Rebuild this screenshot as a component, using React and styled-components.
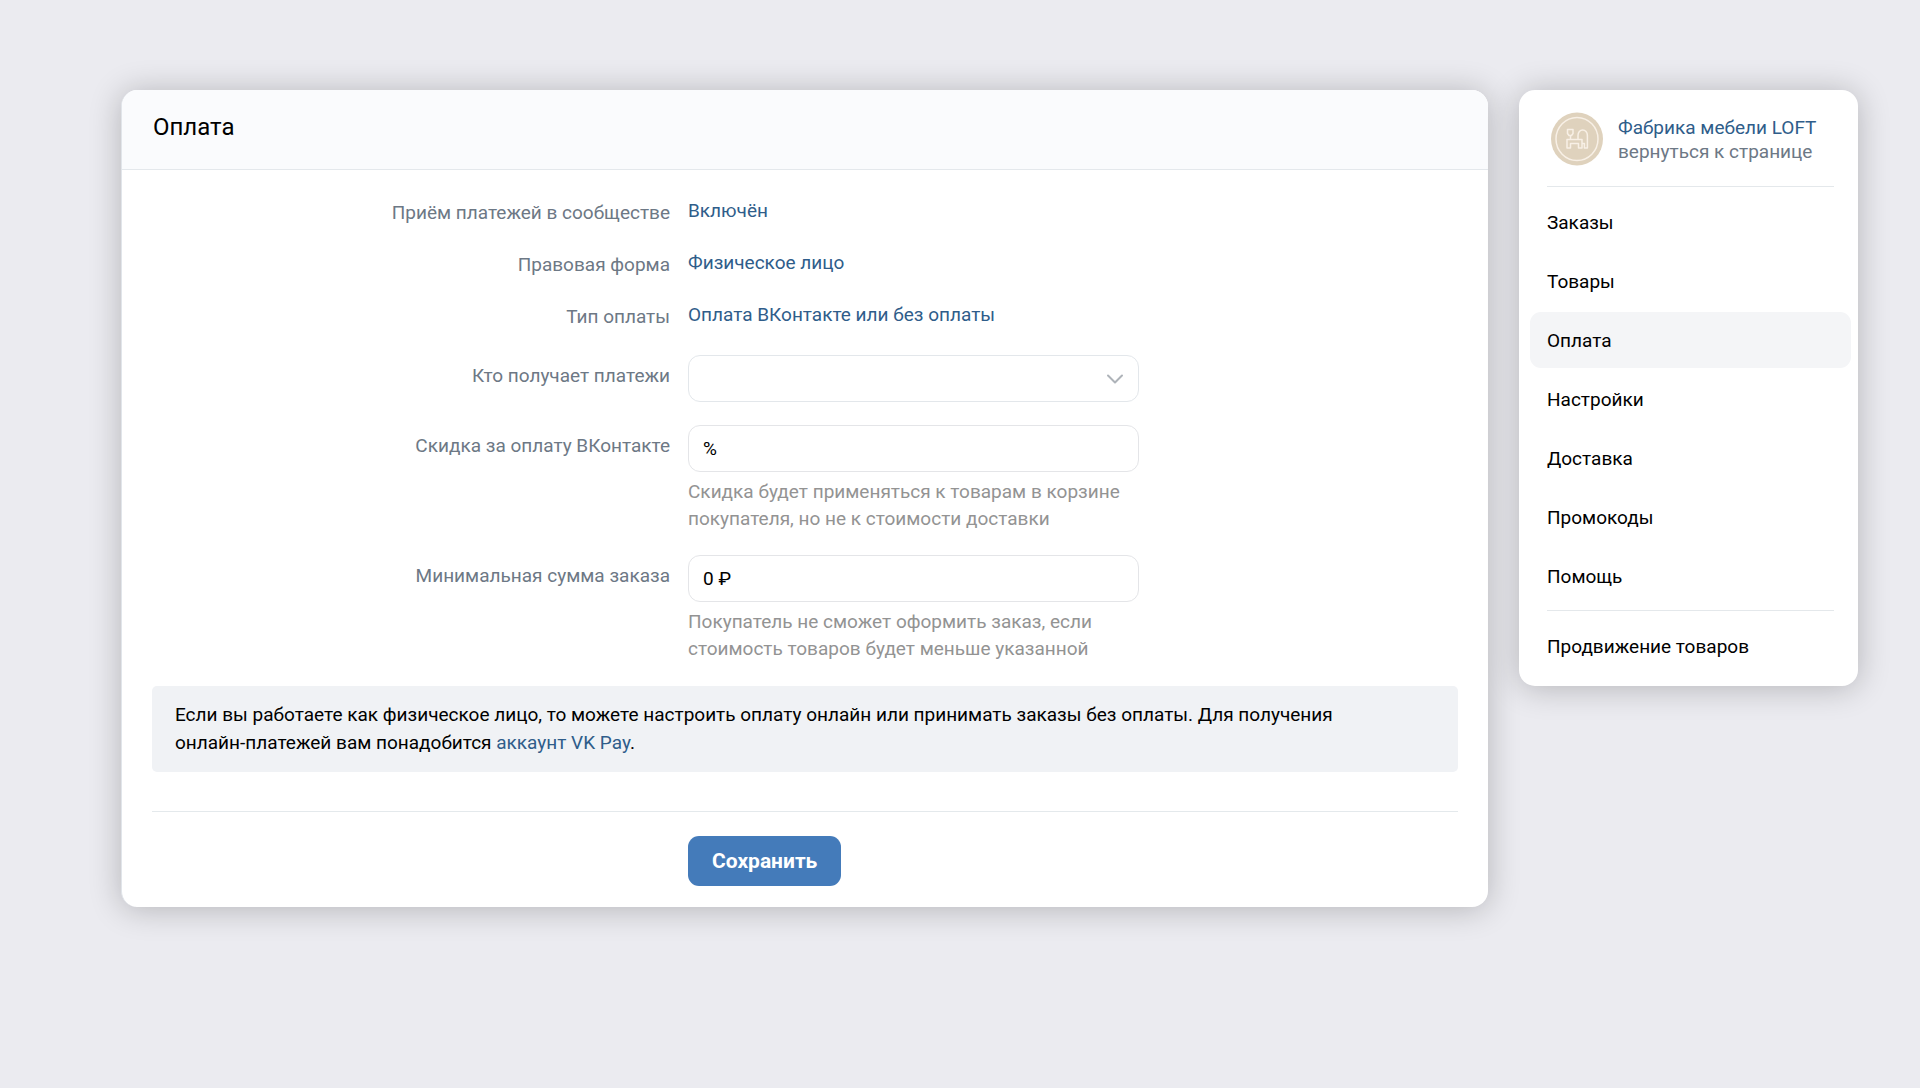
import React, { useState } from "react";
import styled, { createGlobalStyle } from "styled-components";

const GlobalStyle = createGlobalStyle`
  * {
    box-sizing: border-box;
  }
  body {
    margin: 0;
    background-color: #ebebf0;
    font-family: Roboto, "Liberation Sans", sans-serif;
    font-size: 19px;
    line-height: 24px;
    color: #000;
  }
  input, select, button {
    font: inherit;
  }
`;

const Page = styled.div`
  display: grid;
  grid-template-columns: minmax(0, 1fr) 339px;
  align-items: start;
  gap: 31px;
  padding: 90px 62px 60px 121px;
`;

const Card = styled.div`
  background-color: #fff;
  border-radius: 16px;
  overflow: hidden;
  box-shadow: 0 2px 32px rgba(0, 0, 0, 0.24);
`;

const MainCard = styled(Card)`
  border-left: 1px solid #e1e5ea;
`;

const CardHeader = styled.header`
  height: 80px;
  padding: 24px 31px;
  background-color: #fafbfd;
  border-bottom: 1px solid #e4e8ec;
`;

const Title = styled.h1`
  margin: 0;
  font-size: 24px;
  line-height: 26px;
  font-weight: normal;
`;

const Form = styled.form`
  padding: 29px 30px 21px;
`;

const Rows = styled.div`
  display: flex;
  flex-direction: column;
  gap: ${(props) => props.$gap}px;
  margin-bottom: ${(props) => props.$bottom}px;
`;

const Row = styled.div`
  display: grid;
  grid-template-columns: minmax(0, 518px) minmax(0, 451px);
  column-gap: 18px;
`;

const Label = styled.label`
  padding-top: ${(props) => (props.$field ? 9 : 2)}px;
  text-align: right;
  color: #6d7885;
`;

const Link = styled.a`
  color: #2f5d8a;
  text-decoration: none;
`;

const SelectBox = styled.div`
  position: relative;
`;

const Select = styled.select`
  display: block;
  width: 100%;
  height: 47px;
  padding: 0 40px 0 14px;
  appearance: none;
  background-color: #fff;
  border: 1px solid #e3e7eb;
  border-radius: 12px;
`;

const Chevron = styled.svg`
  position: absolute;
  top: 19px;
  right: 15px;
  pointer-events: none;
`;

const Input = styled.input`
  display: block;
  width: 100%;
  height: 47px;
  padding: 0 14px;
  background-color: #fff;
  border: 1px solid #e4e5e8;
  border-radius: 12px;
  color: #000;
`;

const Hint = styled.p`
  margin: 6px 0 0;
  line-height: 27px;
  color: #939393;
`;

const Note = styled.p`
  margin: 0;
  padding: 15px 23px;
  line-height: 28px;
  background-color: #f0f2f5;
  border-radius: 5px;
`;

const NoWrap = styled.span`
  white-space: nowrap;
`;

const Footer = styled.div`
  margin-top: 39px;
  padding-top: 24px;
  border-top: 1px solid #e4e9ec;
`;

const SaveButton = styled.button`
  grid-column: 2;
  justify-self: start;
  height: 50px;
  padding: 0 24px;
  background-color: #447bba;
  border: none;
  border-radius: 11px;
  color: #fff;
  font-size: 21px;
  font-weight: bold;
  cursor: pointer;
`;

const SideCard = styled(Card)`
  padding: 22px 7px 12px 11px;
`;

const Group = styled.a`
  display: flex;
  align-items: center;
  gap: 15px;
  padding-left: 21px;
  text-decoration: none;
`;

const GroupText = styled.div`
  display: flex;
  flex-direction: column;
  padding-top: 2px;
  color: #6d7885;
`;

const Divider = styled.hr`
  width: auto;
  height: 1px;
  margin: ${(props) => props.$top}px 17px 7px;
  border: none;
  background-color: #e4e8eb;
`;

const Menu = styled.nav`
  display: flex;
  flex-direction: column;
  gap: 3px;
`;

const MenuItem = styled.a`
  padding: 17px 17px 15px;
  border-radius: 11px;
  background-color: ${(props) => (props.$active ? "#f4f5f7" : "transparent")};
  color: #000;
  text-decoration: none;
`;

const info = [
  { label: "Приём платежей в сообществе", value: "Включён" },
  { label: "Правовая форма", value: "Физическое лицо" },
  { label: "Тип оплаты", value: "Оплата ВКонтакте или без оплаты" },
];

const menu = [
  "Заказы",
  "Товары",
  "Оплата",
  "Настройки",
  "Доставка",
  "Промокоды",
  "Помощь",
];

const Logo = () => (
  <svg width="52" height="54" viewBox="0 0 52 54" fill="none">
    <ellipse cx="26" cy="27" rx="26" ry="26.5" fill="#dfd2bd" />
    <g stroke="#f8f0e6" strokeWidth="1.5" strokeLinejoin="round">
      <ellipse cx="26" cy="27" rx="21" ry="21.5" />
      <path d="M16.500 17.500h5.500v4l-1.500 2h-2.500l-1.500-2z" />
      <path d="M19.500 23.500v4" />
      <path d="M27 27.500v-4a4.700 5.500 0 0 1 9.400 0V36h-3v-4.500H31" />
      <path d="M16 27.500h15V36h-3.500v-4.500h-8V36H16z" />
    </g>
  </svg>
);

const App = () => {
  const [receiver, setReceiver] = useState("");
  const [discount, setDiscount] = useState("%");
  const [minSum, setMinSum] = useState("0 ₽");

  return (
    <>
      <GlobalStyle />
      <Page>
        <MainCard as="main">
          <CardHeader>
            <Title>Оплата</Title>
          </CardHeader>
          <Form onSubmit={(e) => e.preventDefault()}>
            <Rows $gap={26} $bottom={26}>
              {info.map((item, i) => (
                <Row key={item.label}>
                  <Label as="span" id={"info" + i}>
                    {item.label}
                  </Label>
                  <div>
                    <Link href="#" aria-describedby={"info" + i}>
                      {item.value}
                    </Link>
                  </div>
                </Row>
              ))}
            </Rows>
            <Rows $gap={23} $bottom={24}>
              <Row>
                <Label $field htmlFor="receiver">
                  Кто получает платежи
                </Label>
                <SelectBox>
                  <Select
                    id="receiver"
                    value={receiver}
                    onChange={(e) => setReceiver(e.target.value)}
                  >
                    <option value=""></option>
                  </Select>
                  <Chevron width="18" height="10" viewBox="0 0 18 10" fill="none">
                    <path
                      d="M2 1.500l7 7 7-7"
                      stroke="#aeb3b9"
                      strokeWidth="2"
                      strokeLinecap="round"
                      strokeLinejoin="round"
                    />
                  </Chevron>
                </SelectBox>
              </Row>
              <Row>
                <Label $field htmlFor="discount">
                  Скидка за оплату ВКонтакте
                </Label>
                <div>
                  <Input
                    id="discount"
                    value={discount}
                    onChange={(e) => setDiscount(e.target.value)}
                  />
                  <Hint>
                    Скидка будет применяться к товарам в корзине покупателя, но
                    не к стоимости доставки
                  </Hint>
                </div>
              </Row>
              <Row>
                <Label $field htmlFor="minSum">
                  Минимальная сумма заказа
                </Label>
                <div>
                  <Input
                    id="minSum"
                    value={minSum}
                    onChange={(e) => setMinSum(e.target.value)}
                  />
                  <Hint>
                    Покупатель не сможет оформить заказ, если стоимость товаров
                    будет меньше указанной
                  </Hint>
                </div>
              </Row>
            </Rows>
            <Note>
              Если вы работаете как физическое лицо, то можете настроить оплату
              онлайн или принимать заказы без оплаты. Для получения{" "}
              <NoWrap>онлайн-платежей</NoWrap> вам понадобится{" "}
              <Link href="#">аккаунт VK Pay</Link>.
            </Note>
            <Footer>
              <Row>
                <SaveButton type="submit">Сохранить</SaveButton>
              </Row>
            </Footer>
          </Form>
        </MainCard>
        <SideCard as="aside">
          <Group href="#">
            <Logo />
            <GroupText>
              <Link as="span">Фабрика мебели LOFT</Link>
              <span>вернуться к странице</span>
            </GroupText>
          </Group>
          <Divider $top={20} />
          <Menu>
            {menu.map((name) => (
              <MenuItem key={name} href="#" $active={name === "Оплата"}>
                {name}
              </MenuItem>
            ))}
          </Menu>
          <Divider $top={6} />
          <Menu>
            <MenuItem href="#">Продвижение товаров</MenuItem>
          </Menu>
        </SideCard>
      </Page>
    </>
  );
};

export default App;
